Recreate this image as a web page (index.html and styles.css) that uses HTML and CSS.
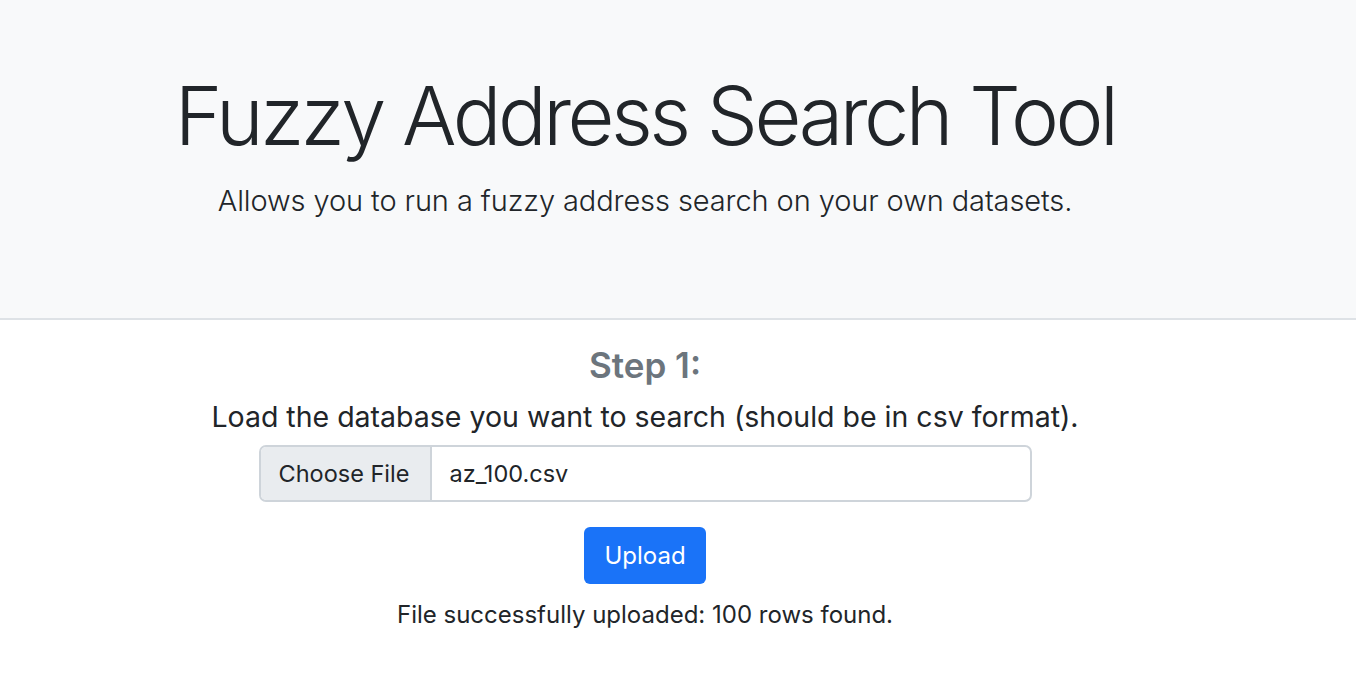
FILE: index.html
```html
<!DOCTYPE html>
<html lang="en">
<head>
<meta charset="utf-8">
<title>Fuzzy Address Search Tool</title>
<link rel="stylesheet" href="styles.css">
</head>
<body>
<header class="hero">
  <div class="inner">
    <h1 class="title">Fuzzy Address Search Tool</h1>
    <p class="lead">Allows you to run a fuzzy address search on your own datasets.</p>
  </div>
</header>
<main class="main">
  <h2 class="step">Step 1:</h2>
  <p class="desc">Load the database you want to search (should be in csv format).</p>
  <div class="file">
    <span class="file-btn">Choose File</span>
    <span class="file-name">az_100.csv</span>
  </div>
  <button class="upload" type="button">Upload</button>
  <p class="status">File successfully uploaded: 100 rows found.</p>
</main>
</body>
</html>
```
FILE: styles.css
```css
* { box-sizing: border-box; }
body {
  margin: 0;
  font-family: Inter, "Noto Sans", sans-serif;
  color: #212529;
  background: #fff;
}
.hero {
  background: #f8f9fa;
  border-bottom: 2px solid #dee2e6;
  height: 320px;
}
.inner {
  width: 1290px;
  text-align: center;
  padding-top: 68px;
}
.title {
  margin: 0;
  font-size: 81px;
  font-weight: 300;
  line-height: 1.2;
  letter-spacing: -3.5px;
}
.lead {
  margin: 14px 0 0;
  font-size: 29px;
  font-weight: 300;
  line-height: 1.5;
  letter-spacing: -0.1px;
}
.main {
  width: 1290px;
  display: flex;
  flex-direction: column;
  align-items: center;
  text-align: center;
}
.step {
  margin: 24px 0 0;
  font-size: 35px;
  font-weight: 600;
  line-height: 1.2;
  color: #6c757d;
}
.desc {
  margin: 10px 0 0;
  font-size: 28.5px;
  font-weight: 400;
  line-height: 1.5;
}
.file {
  margin-top: 6px;
  width: 773px;
  height: 57px;
  display: flex;
  border: 2px solid #ced4da;
  border-radius: 7px;
  overflow: hidden;
  font-size: 23.5px;
}
.file-btn {
  display: flex;
  align-items: center;
  padding: 0 18px;
  background: #e9ecef;
  border-right: 2px solid #ced4da;
  width: 171px;
}
.file-name {
  display: flex;
  align-items: center;
  padding: 0 18px;
}
.upload {
  margin-top: 25px;
  width: 122px;
  height: 57px;
  border: 0;
  border-radius: 6px;
  background: #1a73f8;
  color: #fff;
  font-family: inherit;
  font-size: 24px;
  font-weight: 400;
}
.status {
  margin: 13px 0 0;
  font-size: 24px;
  line-height: 1.5;
}
```
